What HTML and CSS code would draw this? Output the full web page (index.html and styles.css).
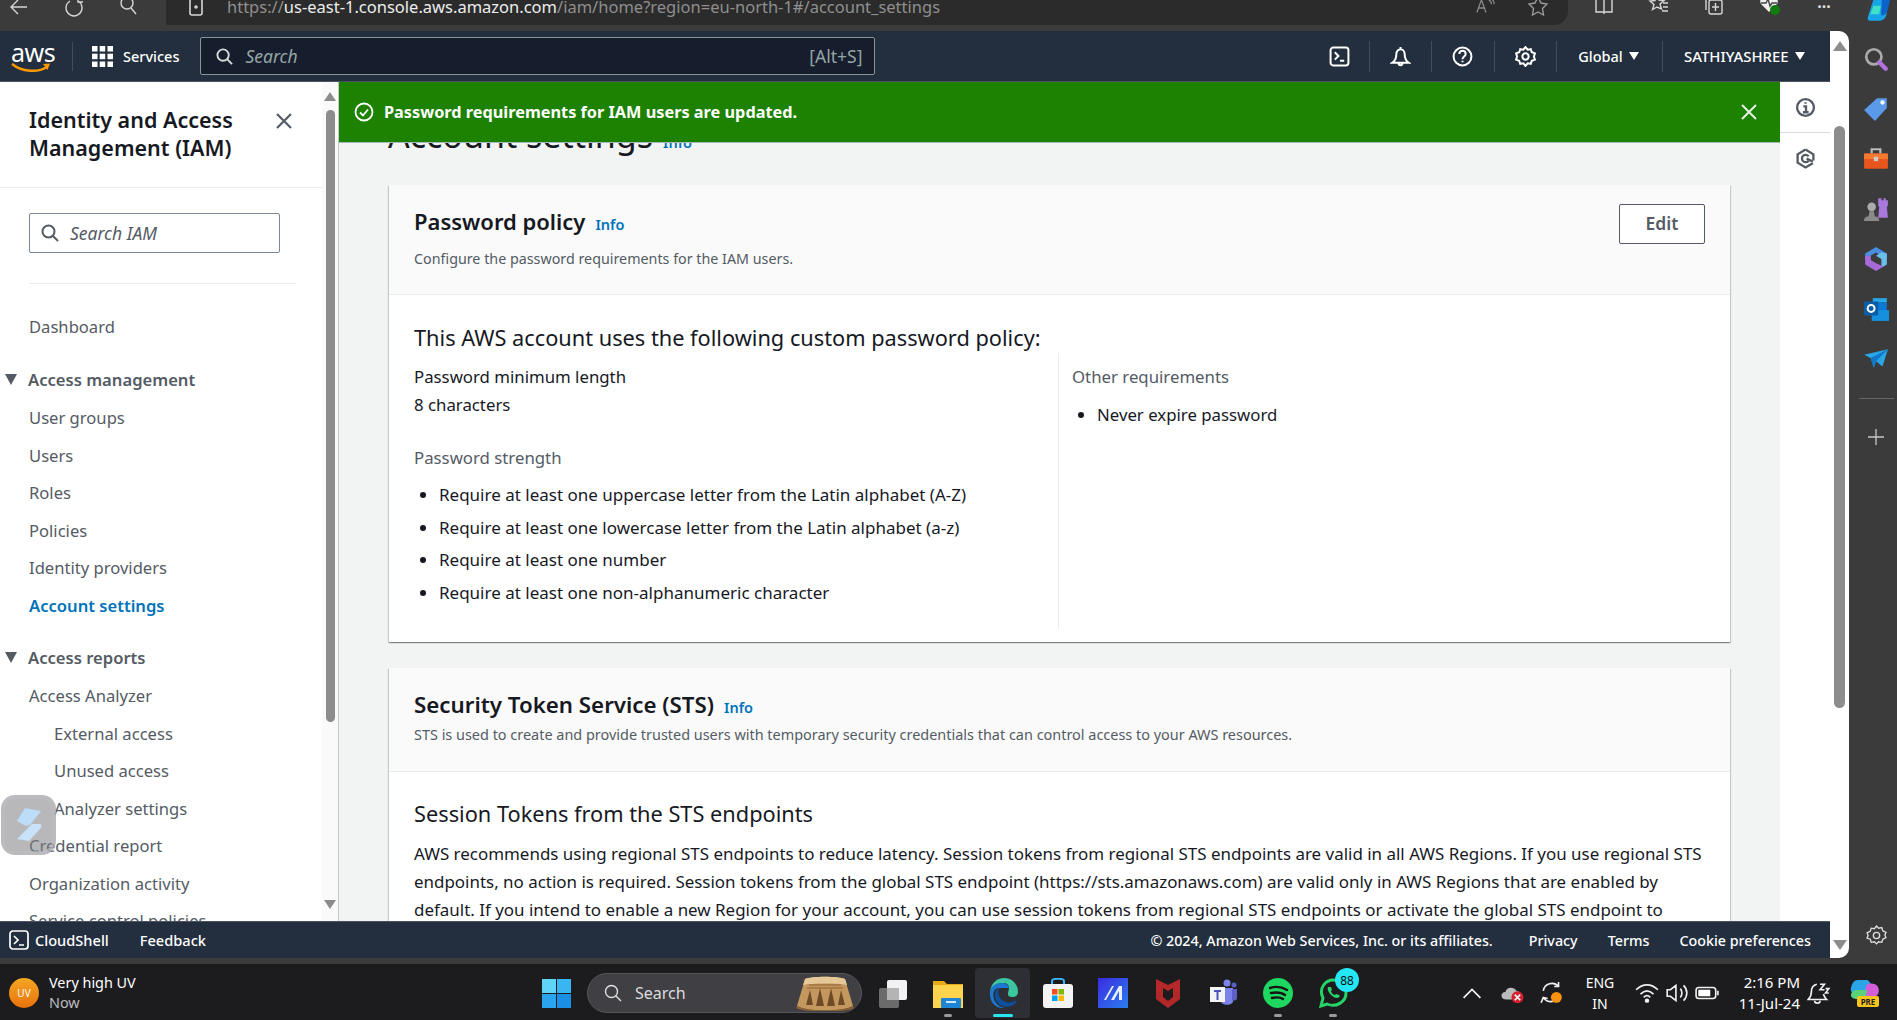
FILE: index.html
```html
<!DOCTYPE html>
<html lang="en">
<head>
    <meta charset="UTF-8">
    <meta name="viewport" content="width=device-width, initial-scale=1.0">
    <title>Account settings</title>
    <link rel="stylesheet" href="styles.css">
</head>
<body>
    <!-- Browser toolbar -->
    <div class="browser-bar">
        <svg class="bar-icon back-icon" viewBox="0 0 20 20"><path d="M18 9H3M9 2 2 9l7 7"/></svg>
        <svg class="bar-icon reload-icon" viewBox="0 0 20 20"><path d="M14 3a8 8 0 1 1-8 0M14 -2v6h5"/></svg>
        <svg class="bar-icon find-icon" viewBox="0 0 20 20"><circle cx="8" cy="5" r="6"/><path d="m12 10 5 6"/></svg>
        <div class="url-pill">
            <svg class="bar-icon lock-icon" viewBox="0 0 20 20"><rect x="4" y="2" width="12" height="16" rx="2"/><circle cx="10" cy="10" r="1"/></svg>
            <div class="url-text">https://<span class="url-host">us-east-1.console.aws.amazon.com</span>/iam/home?region=eu-north-1#/account_settings</div>
            <svg class="bar-icon read-icon" viewBox="0 0 22 20"><path d="M1 15 6 1l5 14M3 10h6M14 1c2 1 3 3 3 5M17 0c2 1 3 3 3 6"/></svg>
            <svg class="bar-icon star-icon" viewBox="0 0 20 20"><path d="m10 -1 3 6 6 1-4.500 4.500L15.500 17 10 14l-5.500 3 1-6.500L1 6l6-1z"/></svg>
        </div>
        <div class="bar-tools">
            <svg class="bar-icon" viewBox="0 0 20 20"><path d="M2 -2h16v16H2zM10 -4v20"/></svg>
            <svg class="bar-icon" viewBox="0 0 20 20"><path d="m8 -3 2 5 5 .5-4 3.500 1.500 5L8 9l-4.500 2.500L5 6.500 1 3l5-.500zM14 5h5M14 9h5M13 13h6"/></svg>
            <svg class="bar-icon" viewBox="0 0 20 20"><rect x="5" y="2" width="13" height="14" rx="2"/><path d="M2 12V0M11.500 5v8M8 9h7"/></svg>
            <svg class="bar-icon health-icon" viewBox="0 0 20 20"><path d="M10 14 2 6c-2-3 0-8 4-8 2 0 3 1 4 2 1-1 2-2 4-2 4 0 6 5 4 8z" class="health-fill"/><path d="M2 5h5l2-4 2 7 2-3h5" class="health-line"/><circle cx="16" cy="12" r="5" fill="#107c10" stroke="none"/></svg>
            <div class="more-dots">···</div>
            <svg class="copilot-top" viewBox="0 0 24 24"><path d="M8 -4h14l-4 20c-1 4-3 6-7 6H3c-2 0-3-2-2-4z" fill="#1aa4e8"/><path d="M14 -4h9L19 12c-1 4-3 5-6 5z" fill="#0d63c9"/><path d="M6 8h7l-2 8H3z" fill="#3ee0c8"/></svg>
        </div>
    </div>

    <div class="window">
        <div class="console">
            <!-- AWS top navigation -->
            <header class="top-nav">
                <div class="aws-logo">
                    <span class="aws-word">aws</span>
                    <svg class="aws-smile" viewBox="0 0 40 12"><path d="M1 2c10 8 26 9 35 3" fill="none" stroke="#ff9900" stroke-width="2.500"/><path d="m32 2 7-.5-2.500 6.500z" fill="#ff9900"/></svg>
                </div>
                <div class="nav-sep logo-sep"></div>
                <div class="services">
                    <svg class="grid-icon" viewBox="0 0 21 21" fill="#fff"><rect width="5.500" height="5.500"/><rect x="7.700" width="5.500" height="5.500"/><rect x="15.500" width="5.500" height="5.500"/><rect y="7.700" width="5.500" height="5.500"/><rect x="7.700" y="7.700" width="5.500" height="5.500"/><rect x="15.500" y="7.700" width="5.500" height="5.500"/><rect y="15.500" width="5.500" height="5.500"/><rect x="7.700" y="15.500" width="5.500" height="5.500"/><rect x="15.500" y="15.500" width="5.500" height="5.500"/></svg>
                    <span>Services</span>
                </div>
                <div class="nav-search">
                    <svg class="search-glyph" viewBox="0 0 18 18"><circle cx="7.500" cy="7.500" r="6"/><path d="m12 12 5 5"/></svg>
                    <span class="nav-search-text">Search</span>
                    <span class="nav-search-key">[Alt+S]</span>
                </div>
                <div class="nav-right">
                    <div class="nav-item">
                        <svg class="nav-icon shell-nudge" viewBox="0 0 20 20"><rect x="1.500" y="1.500" width="17" height="17" rx="2.500"/><path d="m5.500 6 3.500 3.500-3.500 3.500M10.500 14h4"/></svg>
                    </div>
                    <div class="nav-item">
                        <svg class="nav-icon" viewBox="0 0 20 20"><path d="M10 1v2M6 8c0-3 2-5 4-5s4 2 4 5c0 4 1 6 4 8H2c3-2 4-4 4-8zM8 16c0 3 4 3 4 0"/></svg>
                    </div>
                    <div class="nav-item">
                        <svg class="nav-icon" viewBox="0 0 20 20"><circle cx="10" cy="10" r="8.500"/><path d="M7 7.500c0-4 6-4 6 0 0 2.500-3 2.500-3 5M10 14v1.500"/></svg>
                    </div>
                    <div class="nav-item">
                        <svg class="nav-icon" viewBox="0 0 20 20"><path d="m10 1 2 2.500 3-.5 1 3 3 1-1 3 1 3-3 1-1 3-3-.5L10 19l-2-2.500-3 .5-1-3-3-1 1-3-1-3 3-1 1-3 3 .5z"/><circle cx="10" cy="10" r="3"/></svg>
                    </div>
                    <div class="nav-item nav-text region">Global <span class="nav-caret"></span></div>
                    <div class="nav-item nav-text account">SATHIYASHREE <span class="nav-caret"></span></div>
                </div>
            </header>

            <div class="middle">
                <!-- Left navigation -->
                <aside class="side-nav">
                    <div class="side-inner">
                        <div class="side-head">
                            <h2 class="side-title">Identity and Access Management (IAM)</h2>
                            <svg class="side-close" viewBox="0 0 16 16"><path d="m1 1 14 14M15 1 1 15"/></svg>
                        </div>
                        <div class="side-search">
                            <svg class="side-search-icon" viewBox="0 0 18 18"><circle cx="7.500" cy="7.500" r="6"/><path d="m12 12 5 5"/></svg>
                            <span>Search IAM</span>
                        </div>
                        <div class="side-divider"></div>
                        <a class="side-link">Dashboard</a>
                        <div class="side-section"><span class="side-caret"></span>Access management</div>
                        <a class="side-link">User groups</a>
                        <a class="side-link">Users</a>
                        <a class="side-link">Roles</a>
                        <a class="side-link">Policies</a>
                        <a class="side-link">Identity providers</a>
                        <a class="side-link active">Account settings</a>
                        <div class="side-section"><span class="side-caret"></span>Access reports</div>
                        <a class="side-link">Access Analyzer</a>
                        <a class="side-link sub">External access</a>
                        <a class="side-link sub">Unused access</a>
                        <a class="side-link sub">Analyzer settings</a>
                        <a class="side-link">Credential report</a>
                        <a class="side-link">Organization activity</a>
                        <a class="side-link">Service control policies</a>
                    </div>
                    <div class="side-scroll">
                        <span class="arrow-up"></span>
                        <div class="side-thumb"></div>
                        <span class="arrow-down"></span>
                    </div>
                </aside>

                <main class="main">
                    <div class="flash">
                        <svg class="flash-check" viewBox="0 0 20 20"><circle cx="10" cy="10" r="8.500"/><path d="m6 10.500 3 3 5-6"/></svg>
                        <span class="flash-text">Password requirements for IAM users are updated.</span>
                        <svg class="flash-close" viewBox="0 0 16 16"><path d="m1 1 14 14M15 1 1 15"/></svg>
                    </div>

                    <div class="page-head">
                        <h1>Account settings</h1>
                        <a class="info-link">Info</a>
                    </div>

                    <section class="card first-card">
                        <div class="card-header">
                            <div>
                                <div class="title-row">
                                    <h2>Password policy</h2>
                                    <a class="info-link">Info</a>
                                </div>
                                <p class="card-desc">Configure the password requirements for the IAM users.</p>
                            </div>
                            <button class="edit-btn">Edit</button>
                        </div>
                        <div class="card-body">
                            <h3>This AWS account uses the following custom password policy:</h3>
                            <div class="policy-cols">
                                <div class="policy-left">
                                    <div class="line">Password minimum length</div>
                                    <div class="line">8 characters</div>
                                    <div class="line muted strength">Password strength</div>
                                    <ul class="policy-list">
                                        <li>Require at least one uppercase letter from the Latin alphabet (A-Z)</li>
                                        <li>Require at least one lowercase letter from the Latin alphabet (a-z)</li>
                                        <li>Require at least one number</li>
                                        <li>Require at least one non-alphanumeric character</li>
                                    </ul>
                                </div>
                                <div class="policy-right">
                                    <div class="line muted">Other requirements</div>
                                    <ul class="policy-list">
                                        <li>Never expire password</li>
                                    </ul>
                                </div>
                            </div>
                        </div>
                    </section>

                    <section class="card second-card">
                        <div class="card-header">
                            <div>
                                <div class="title-row">
                                    <h2>Security Token Service (STS)</h2>
                                    <a class="info-link">Info</a>
                                </div>
                                <p class="card-desc tight">STS is used to create and provide trusted users with temporary security credentials that can control access to your AWS resources.</p>
                            </div>
                        </div>
                        <div class="card-body">
                            <h3>Session Tokens from the STS endpoints</h3>
                            <p class="sts-text">AWS recommends using regional STS endpoints to reduce latency. Session tokens from regional STS endpoints are valid in all AWS Regions. If you use regional STS endpoints, no action is required. Session tokens from the global STS endpoint (https://sts.amazonaws.com) are valid only in AWS Regions that are enabled by default. If you intend to enable a new Region for your account, you can use session tokens from regional STS endpoints or activate the global STS endpoint to</p>
                        </div>
                    </section>
                </main>

                <!-- Right tools rail -->
                <aside class="tools">
                    <div class="tool-cell">
                        <svg class="tool-icon" viewBox="0 0 20 20"><circle cx="10" cy="10" r="8"/><path d="M8 9h2.500v5M7.500 14.500h5.500M10 5v1.500"/></svg>
                    </div>
                    <div class="tool-cell">
                        <svg class="tool-icon" viewBox="0 0 20 20"><path d="M10 1.500 17.500 6v6M17 14.500 10 18.500 2.500 14V6L10 1.500"/><path d="M13 8a3.500 3.500 0 1 0 0 4"/><path d="m11 10 6 3"/></svg>
                    </div>
                </aside>
            </div>

            <footer class="console-footer">
                <svg class="foot-shell" viewBox="0 0 20 20"><rect x="1" y="1" width="18" height="18" rx="3"/><path d="m5 6 4 4-4 4M10 15h5"/></svg>
                <span class="foot-link shell-label">CloudShell</span>
                <span class="foot-link">Feedback</span>
                <div class="foot-right">
                    <span class="foot-link copyright">© 2024, Amazon Web Services, Inc. or its affiliates.</span>
                    <span class="foot-link">Privacy</span>
                    <span class="foot-link">Terms</span>
                    <span class="foot-link">Cookie preferences</span>
                </div>
            </footer>
        </div>

        <div class="page-scroll">
            <span class="arrow-up big"></span>
            <div class="page-thumb"></div>
            <span class="arrow-down big"></span>
        </div>

        <!-- Edge sidebar -->
        <div class="edge-rail">
            <svg class="edge-icon" viewBox="0 0 24 24"><circle cx="10" cy="10" r="7" fill="none" stroke="#aaa" stroke-width="2.500"/><path d="m15 15 6 6" stroke="#b46fe0" stroke-width="4" stroke-linecap="round"/></svg>
            <svg class="edge-icon" viewBox="0 0 24 24"><path d="M13 2h9v9L11 23 1 13z" fill="#5b9ae8"/><circle cx="18" cy="6" r="2" fill="#fff"/></svg>
            <svg class="edge-icon" viewBox="0 0 24 24"><path d="M8 7V3h8v4" fill="none" stroke="#bbb" stroke-width="2"/><rect x="1" y="7" width="22" height="14" rx="1" fill="#e8561e"/><rect x="1" y="7" width="22" height="5" fill="#f47a32"/><rect x="10" y="10" width="4" height="4" fill="#ccc"/></svg>
            <svg class="edge-icon" viewBox="0 0 24 24"><circle cx="8" cy="10" r="4" fill="#aaa"/><path d="M6 14h4l1 5H5zM1 23c0-3 2-4 3-4h8c1 0 3 1 3 4z" fill="#8a8a8a"/><path d="M15 2h2v2h2V2h2v2h2v5l-1 1 1 10h-9l1-10-1-1V2z" fill="#a878dc"/></svg>
            <svg class="edge-icon" viewBox="0 0 24 24"><path d="M12 1 22 7v5l-5-3-5-3-5 3v6l-5-3V7z" fill="#4a8ee0"/><path d="M22 7v10l-5 3v-8l-5-3 5-3z" fill="#6ac0ec"/><path d="M2 9v8l10 6 7-4-7-3-5-3V9z" fill="#a86ad8"/></svg>
            <svg class="edge-icon" viewBox="0 0 24 24"><path d="M9 2h13v4H9z" fill="#28a8ea"/><path d="M9 6h13v8H9z" fill="#0a78d4"/><path d="M8 13h16v10H8z" fill="#1490df"/><rect x="1" y="5" width="13" height="13" rx="1" fill="#0a5ea8"/><circle cx="7.500" cy="11.500" r="3.200" fill="none" stroke="#fff" stroke-width="1.800"/></svg>
            <svg class="edge-icon" viewBox="0 0 24 24"><path d="M1 8 23 3 18 19l-6-5-2 6-3-9z" fill="#2aa6e8"/><path d="m7 11 16-8-11 11-2 6z" fill="#0f78c8"/></svg>
            <div class="edge-divider"></div>
            <svg class="edge-plus" viewBox="0 0 16 16"><path d="M8 0v16M0 8h16"/></svg>
            <svg class="edge-gear" viewBox="0 0 20 20"><path d="m10 1 2 2 3-.5 1 3 3 1.500-1 2.500 1 2.500-3 1.500-1 3-3-.5-2 2-2-2-3 .5-1-3L1 12.500 2 10 1 7.500 4 6l1-3 3 .5z"/><circle cx="10" cy="10" r="3"/></svg>
        </div>
    </div>

    <!-- Windows taskbar -->
    <div class="taskbar">
        <div class="weather">
            <div class="uv-badge">UV</div>
            <div>
                <div class="weather-top">Very high UV</div>
                <div class="weather-sub">Now</div>
            </div>
        </div>
        <svg class="start-icon" viewBox="0 0 29 29"><rect width="14" height="14" fill="#5fd3f8"/><rect x="15" width="14" height="14" fill="#38b6f2"/><rect y="15" width="14" height="14" fill="#2aa4ef"/><rect x="15" y="15" width="14" height="14" fill="#1a8fe6"/></svg>
        <div class="task-search">
            <svg class="task-search-icon" viewBox="0 0 18 18"><circle cx="7.500" cy="7.500" r="6"/><path d="m12 12 5 5"/></svg>
            <span class="task-search-text">Search</span>
            <svg class="task-hero" viewBox="0 0 60 36"><path d="M10 4c6-3 34-3 40 0l8 27c-10 6-46 6-56 0z" fill="#c4975f"/><path d="M10 4c6-3 34-3 40 0l2 6c-8-2-36-2-44 0z" fill="#e6c796"/><path d="M11 30l4-15 3 15zM21 31l4-18 4 18zM32 31l4-18 4 18zM43 30l3-15 4 15z" fill="#6f4a26"/><path d="M14 10h32M12 13h36" stroke="#8d6233" stroke-width="1" fill="none"/><path d="M2 31c10 6 46 6 56 0l1 2c-10 5-48 5-58 0z" fill="#8d6233"/></svg>
        </div>
        <div class="task-apps">
            <div class="task-app">
                <svg class="app-icon" viewBox="0 0 30 30"><rect x="9" y="2" width="20" height="20" rx="2" fill="#f2f2f2"/><rect x="1" y="10" width="20" height="20" rx="2" fill="#6b6b6b"/><rect x="9" y="10" width="12" height="12" fill="#b4b4b4"/></svg>
            </div>
            <div class="task-app running">
                <svg class="app-icon" viewBox="0 0 30 30"><path d="M0 3h11l3 3h16v24H0z" fill="#e8a917"/><rect y="7" width="30" height="23" fill="#fcd34d"/><rect x="8" y="20" width="20" height="10" rx="1" fill="#1e84d4"/><rect x="13" y="23" width="10" height="2" fill="#cfe8fa"/></svg>
            </div>
            <div class="task-app active">
                <svg class="app-icon" viewBox="0 0 30 30"><path d="M2 14C3 5 9 0 16 0c8 0 14 6 14 14 0 3-2 5-6 5-3 0-4-1-4-3 0-3 1-4 1-6C21 6 18 5 15 5 8 5 3 9 2 14z" fill="#3bc6a0"/><path d="M2 14C3 8 8 5 14 5c3 0 7 2 7 5H11C6 10 4 16 6 21c1 4 5 8 11 9C8 31 1 24 2 14z" fill="#1b77d2"/><path d="M11 10c-4 2-5 8-3 12 2 5 8 8 15 6 3-1 5-3 6-6-4 3-12 4-16-1-3-3-3-8-2-11z" fill="#0c4f9e"/></svg>
            </div>
            <div class="task-app">
                <svg class="app-icon" viewBox="0 0 30 30"><path d="M9 6V3c0-3 12-3 12 0v3" fill="none" stroke="#38b6f2" stroke-width="2"/><rect y="6" width="30" height="24" rx="3" fill="#f4f4f4"/><rect x="9" y="11" width="5.500" height="5.500" fill="#f25022"/><rect x="15.500" y="11" width="5.500" height="5.500" fill="#7fba00"/><rect x="9" y="17.500" width="5.500" height="5.500" fill="#00a4ef"/><rect x="15.500" y="17.500" width="5.500" height="5.500" fill="#ffb900"/></svg>
            </div>
            <div class="task-app">
                <svg class="app-icon" viewBox="0 0 30 30"><defs><linearGradient id="maestro" x1="0" y1="0" x2="1" y2="1"><stop offset="0" stop-color="#3b2be0"/><stop offset="1" stop-color="#2a7ff0"/></linearGradient></defs><rect width="30" height="30" fill="url(#maestro)"/><path d="M6 22 14 8h2L8 22zM13 22l8-14h3v14h-3V13l-5 9z" fill="#e8f0ff"/></svg>
            </div>
            <div class="task-app">
                <svg class="app-icon" viewBox="0 0 30 30"><path d="M3 1 15 7 27 1v20L15 30 3 21z" fill="#b5282a"/><path d="M10 10l5 3 5-3v9l-5 4-5-4z" fill="#1c1c1f"/></svg>
            </div>
            <div class="task-app">
                <svg class="app-icon" viewBox="0 0 30 30"><circle cx="19" cy="5" r="3.500" fill="#7b83eb"/><circle cx="26" cy="7" r="2.500" fill="#5b5fc7"/><path d="M13 10h12v13c0 5-12 5-12 0z" fill="#7b83eb"/><path d="M24 11h5v9c0 3-4 3-5 2z" fill="#5b5fc7"/><rect x="2" y="9" width="15" height="15" fill="#f4f4f4"/><path d="M6 12h7v2h-2.500v8h-2v-8H6z" fill="#4b53bc"/></svg>
            </div>
            <div class="task-app running">
                <svg class="app-icon" viewBox="0 0 30 30"><circle cx="15" cy="15" r="15" fill="#1ed760"/><path d="M7 10c6-2 12-1 17 2M8 15c5-1 10-1 14 2M9 20c4-1 8-1 11 1" fill="none" stroke="#191414" stroke-width="2.400" stroke-linecap="round"/></svg>
            </div>
            <div class="task-app running">
                <svg class="app-icon" viewBox="0 0 30 30"><path d="M3 28 5 20C0 10 8 2 15 2c8 0 13 6 13 13 0 9-10 15-19 11z" fill="none" stroke="#25d366" stroke-width="3"/><path d="M10 9c-2 3 4 11 9 11 3 0 3-3 2-3l-3-1-1 1c-2 0-4-3-4-4l1-1-1-3z" fill="#25d366"/></svg>
                <span class="app-badge">88</span>
            </div>
        </div>
        <div class="tray">
            <svg class="tray-icon" viewBox="0 0 20 20"><path d="m3 14 7-7 7 7"/></svg>
            <svg class="tray-icon" viewBox="0 0 22 20"><path d="M6 16c-6 0-6-7-1-7 1-5 8-5 10-1 4 0 5 5 1 8z" fill="#bbb" stroke="none"/><circle cx="16" cy="14" r="5.500" fill="#d4202f" stroke="none"/><path d="m13.500 11.500 5 5m0-5-5 5" stroke-width="1.500"/></svg>
            <svg class="tray-icon sync-icon" viewBox="0 0 22 22"><path d="M3 9a8 8 0 0 1 14-4M17 1v4h-4M16 16a8 8 0 0 1-13-1M1 20l2-5 4 1"/><circle cx="15" cy="15" r="5" fill="#f7930e" stroke="none"/></svg>
            <div class="tray-lang"><div>ENG</div><div>IN</div></div>
            <div class="tray-net">
                <svg class="tray-icon" viewBox="0 0 22 20"><path d="M1 7c6-6 14-6 20 0M5 11c4-4 8-4 12 0"/><path d="M8 14c2-2 4-2 6 0"/><circle cx="11" cy="17" r="1.300" fill="#fff"/></svg>
                <svg class="tray-icon" viewBox="0 0 22 20"><path d="M2 7v6h3l5 4V3L5 7zM14 6c2 2 2 6 0 8M17 3c4 4 4 10 0 14"/></svg>
                <svg class="tray-icon" viewBox="0 0 22 20"><rect x="1" y="5" width="18" height="10" rx="2.500"/><rect x="3" y="7" width="11" height="6" fill="#fff" stroke="none"/><path d="M21 8v4"/></svg>
            </div>
            <div class="tray-clock"><div>2:16 PM</div><div>11-Jul-24</div></div>
            <svg class="tray-icon bell-z" viewBox="0 0 22 22"><path d="M9 3C5 4 4 7 4 10c0 3-1 5-3 7h17c-2-2-2-3-3-5M7 18c0 3 5 3 5 0M12 3h4l-4 5h4M17 7h3l-3 4h3"/></svg>
            <svg class="tray-copilot" viewBox="0 0 32 30"><path d="M9 2h8c3 0 4 2 5 5l3 9H8c-4 0-7-2-6-6 1-5 3-8 7-8z" fill="#2aa6e8"/><path d="M18 6c4-1 9-1 11 3 2 5 0 9-4 10H14z" fill="#d35fd8"/><path d="M7 12c-3 0-5 3-5 5 0 3 3 4 6 4h8l2-9z" fill="#5ad27a"/><rect x="8" y="18" width="22" height="11" rx="2" fill="#f7c51c"/><text x="19" y="27" class="pre-text">PRE</text></svg>
        </div>
    </div>

    <!-- Floating widget over the left navigation -->
    <div class="float-widget">
        <svg class="float-glyph" viewBox="0 0 26 34"><path d="M9 0 25 3 14 17c-2 1-4 1-6 0L1 13z" fill="#bcdcf8"/><path d="M24 16c2 1 2 3 0 5L13 33 1 31l15-15z" fill="#c8e2fa"/></svg>
    </div>
</body>
</html>
```

FILE: styles.css
```css
* {
    box-sizing: border-box;
}

html, body {
    height: 100%;
}

body {
    margin: 0;
    width: 1897px;
    height: 1020px;
    overflow: hidden;
    display: flex;
    flex-direction: column;
    background-color: #3b3b3b;
    font-family: "Noto Sans", "Open Sans", Arial, sans-serif;
    color: #16191f;
}

h1, h2, h3, p, ul {
    margin: 0;
}

svg {
    display: block;
    flex: none;
}

/* browser toolbar */
.browser-bar {
    height: 31px;
    flex: none;
    display: flex;
    align-items: flex-start;
    background-color: #3b3b3b;
    overflow: hidden;
}

.bar-icon {
    width: 20px;
    height: 20px;
    margin-top: -2px;
    fill: none;
    stroke: #d6d6d6;
    stroke-width: 1.4;
    overflow: visible;
}

.back-icon {
    margin-left: 9px;
}

.reload-icon {
    margin-left: 35px;
}

.find-icon {
    margin-left: 35px;
}

.url-pill {
    width: 1402px;
    height: 25px;
    margin-left: 27px;
    padding-left: 20px;
    display: flex;
    align-items: flex-start;
    background-color: #2b2b2b;
    border-radius: 0 0 14px 0;
}

.lock-icon {
    margin-top: -3px;
    stroke-width: 1.6;
}

.url-text {
    width: 1249px;
    margin-left: 21px;
    margin-top: -5px;
    font-size: 16.500px;
    line-height: 24px;
    color: #8f8f8f;
    white-space: nowrap;
}

.url-host {
    color: #ededed;
}

.read-icon {
    width: 20px;
    margin-top: -2px;
    stroke: #8a8a8a;
}

.star-icon {
    margin-left: 32px;
    stroke: #9a9a9a;
}

.bar-tools {
    display: flex;
    align-items: flex-start;
    gap: 35px;
    margin-left: 26px;
}

.health-fill {
    fill: #eee;
    stroke: none;
}

.health-line {
    stroke: #444;
}

.more-dots {
    width: 20px;
    margin-top: -4px;
    font-size: 16px;
    font-weight: 700;
    line-height: 20px;
    color: #ddd;
    text-align: center;
}

.copilot-top {
    width: 26px;
    height: 26px;
    margin-left: -2px;
    margin-top: -3px;
    overflow: visible;
}

/* window: console + scrollbar + edge rail */
.window {
    flex: 1;
    min-height: 0;
    display: flex;
}

.console {
    width: 1830px;
    flex: none;
    display: flex;
    flex-direction: column;
}

.top-nav {
    height: 51px;
    flex: none;
    display: flex;
    align-items: center;
    background-color: #232f3e;
    border-bottom: 1px solid #4a5460;
    color: #fff;
}

.aws-logo {
    width: 40px;
    height: 30px;
    margin-left: 11px;
    flex: none;
}

.aws-word {
    display: block;
    font-size: 25px;
    line-height: 22px;
    letter-spacing: -0.5px;
    color: #fff;
}

.aws-smile {
    width: 40px;
    height: 12px;
    margin-top: -1px;
}

.nav-sep {
    width: 1px;
    height: 29px;
    background-color: #414d5c;
}

.logo-sep {
    margin-left: 21px;
}

.services {
    display: flex;
    align-items: center;
    gap: 10px;
    margin-left: 19px;
    font-size: 14.500px;
    font-weight: 500;
}

.grid-icon {
    width: 21px;
    height: 21px;
}

.nav-search {
    width: 675px;
    height: 38px;
    margin-left: 21px;
    padding: 0 12px 0 15px;
    display: flex;
    align-items: center;
    background-color: #161e2d;
    border: 1px solid #879596;
    border-radius: 2px;
    font-size: 17.500px;
}

.search-glyph {
    width: 17px;
    height: 17px;
    fill: none;
    stroke: #d5dbdb;
    stroke-width: 2;
}

.nav-search-text {
    margin-left: 12px;
    font-style: italic;
    color: #95a5a6;
}

.nav-search-key {
    margin-left: auto;
    color: #95a5a6;
}

.nav-right {
    margin-left: auto;
    display: flex;
    align-items: center;
    height: 31px;
}

.nav-item {
    height: 31px;
    width: 62.500px;
    display: flex;
    align-items: center;
    justify-content: center;
    border-left: 1px solid #414d5c;
    font-size: 14.500px;
    font-weight: 500;
}

.nav-item:first-child {
    border-left: 0;
}

.nav-text {
    gap: 6px;
}

.region {
    width: 106px;
    padding-right: 2px;
}

.account {
    width: 168px;
    justify-content: flex-start;
    padding-left: 21px;
    font-size: 14.900px;
}

.nav-icon {
    width: 21px;
    height: 21px;
    fill: none;
    stroke: #fff;
    stroke-width: 1.900;
}

.shell-nudge {
    margin-left: 4px;
}

.nav-caret {
    width: 0;
    height: 0;
    border-left: 5.500px solid transparent;
    border-right: 5.500px solid transparent;
    border-top: 8px solid #fff;
}

.middle {
    flex: 1;
    min-height: 0;
    display: flex;
}

/* left navigation */
.side-nav {
    width: 338px;
    flex: none;
    display: flex;
    background-color: #fff;
    overflow: hidden;
}

.side-inner {
    width: 322px;
    flex: none;
    overflow: hidden;
}

.side-head {
    padding: 24px 29px 25px 29px;
    display: flex;
    justify-content: space-between;
    border-bottom: 1px solid #eaeded;
}

.side-title {
    width: 225px;
    font-size: 21.500px;
    line-height: 28px;
    font-weight: 600;
}

.side-close {
    width: 16px;
    height: 16px;
    margin: 7px 1px 0 0;
    fill: none;
    stroke: #545b64;
    stroke-width: 2.200;
}

.side-search {
    width: 251px;
    height: 40px;
    margin: 25px 0 0 29px;
    padding-left: 11px;
    display: flex;
    align-items: center;
    gap: 11px;
    border: 1px solid #7d8998;
    border-radius: 2px;
    font-size: 17.500px;
    font-style: italic;
    color: #545b64;
}

.side-search-icon {
    width: 18px;
    height: 18px;
    fill: none;
    stroke: #545b64;
    stroke-width: 2;
}

.side-divider {
    width: 267px;
    height: 1px;
    margin: 30px 0 24px 29px;
    background-color: #eaeded;
}

.side-link, .side-section {
    display: flex;
    align-items: center;
    height: 37.500px;
    font-size: 16.600px;
    white-space: nowrap;
}

.side-link {
    padding-left: 29px;
    color: #545b64;
}

.side-link.sub {
    padding-left: 54px;
}

.side-link.active {
    color: #0073bb;
    font-weight: 600;
}

.side-section {
    height: 38.500px;
    margin-top: 14.800px;
    padding-left: 5px;
    gap: 11px;
    color: #545b64;
    font-weight: 600;
}

.side-caret {
    width: 0;
    height: 0;
    border-left: 6.500px solid transparent;
    border-right: 6.500px solid transparent;
    border-top: 11px solid #545b64;
}

.side-scroll {
    flex: 1;
    padding-top: 10px;
    background-color: #fafafa;
    display: flex;
    flex-direction: column;
    align-items: center;
}

.side-thumb {
    width: 9px;
    height: 612px;
    margin: 9px 0 178px;
    border-radius: 5px;
    background-color: #8c8c8c;
    flex: none;
}

.arrow-up, .arrow-down {
    width: 0;
    height: 0;
    border-left: 6px solid transparent;
    border-right: 6px solid transparent;
    flex: none;
}

.arrow-up {
    border-bottom: 9px solid #8c8c8c;
}

.arrow-down {
    border-top: 9px solid #8c8c8c;
}

/* main content */
.main {
    flex: 1;
    min-width: 0;
    position: relative;
    overflow: hidden;
    padding-top: 32px;
    background-color: #f2f3f3;
    border-left: 1px solid #c4c9c9;
}

.flash {
    position: absolute;
    top: 0;
    left: 0;
    right: 0;
    height: 61px;
    padding: 0 23px 0 15px;
    display: flex;
    align-items: center;
    background-color: #1d8102;
    border-bottom: 1px solid #aab7b8;
    color: #fff;
}

.flash-check {
    width: 20px;
    height: 20px;
    fill: none;
    stroke: #fff;
    stroke-width: 1.800;
}

.flash-text {
    margin-left: 10px;
    font-size: 16.300px;
    font-weight: 700;
}

.flash-close {
    width: 16px;
    height: 16px;
    margin-left: auto;
    fill: none;
    stroke: #e8f0e4;
    stroke-width: 2;
}

.page-head {
    margin-left: 49px;
    height: 42px;
    display: flex;
    align-items: baseline;
    gap: 10px;
}

.page-head h1 {
    font-size: 34px;
    line-height: 42px;
    font-weight: 400;
}

.info-link {
    font-size: 14.500px;
    font-weight: 600;
    color: #0073bb;
}

.card {
    margin: 0 50px;
    background-color: #fff;
    box-shadow: 0 1px 1px 0 rgba(0, 28, 36, 0.3), 1px 1px 1px 0 rgba(0, 28, 36, 0.15), -1px 1px 1px 0 rgba(0, 28, 36, 0.15);
}

.first-card {
    margin-top: 29px;
    height: 457px;
}

.second-card {
    margin-top: 26px;
}

.second-card .title-row {
    margin-top: 3px;
}

.second-card .title-row h2 {
    font-size: 22.300px;
}

.card-header {
    padding: 19px 25px 26px 25px;
    display: flex;
    justify-content: space-between;
    align-items: flex-start;
    background-color: #fafafa;
    border-bottom: 1px solid #eaeded;
}

.title-row {
    margin-top: 2px;
    display: flex;
    align-items: baseline;
    gap: 10px;
}

.title-row h2 {
    font-size: 22px;
    line-height: 30px;
    font-weight: 600;
}

.card-desc {
    margin-top: 13px;
    font-size: 14.300px;
    line-height: 20px;
    color: #545b64;
}

.card-desc.tight {
    margin-top: 5px;
    font-size: 14.450px;
}

.first-card .card-header {
    padding-bottom: 25px;
}

.edit-btn {
    width: 86px;
    height: 40px;
    padding: 0 0 2px;
    background-color: #fff;
    border: 1px solid #545b64;
    border-radius: 2px;
    font-family: inherit;
    font-size: 17.500px;
    font-weight: 600;
    color: #545b64;
}

.card-body {
    padding: 28px 25px 14px;
}

.card-body h3 {
    font-size: 21.750px;
    line-height: 30px;
    font-weight: 400;
}

.policy-cols {
    display: flex;
}

.policy-left {
    width: 645px;
    flex: none;
    padding: 10px 0 19px;
    border-right: 1px solid #eaeded;
}

.policy-right {
    padding: 10px 0 0 13px;
}

.line {
    font-size: 16.800px;
    line-height: 28px;
}

.muted {
    color: #545b64;
}

.strength {
    margin-top: 25px;
}

.policy-list {
    margin-top: 7px;
    padding-left: 25px;
    font-size: 17px;
}

.policy-right .policy-list {
    margin-top: 8px;
    font-size: 16.800px;
}

.policy-list li {
    height: 32.700px;
    line-height: 32.700px;
}

.second-card .card-body {
    padding-top: 27px;
}

.sts-text {
    margin-top: 11px;
    font-size: 16.950px;
    line-height: 27.800px;
}

/* right tools rail */
.tools {
    width: 50px;
    flex: none;
    background-color: #fff;
}

.tool-cell {
    height: 51px;
    display: flex;
    align-items: center;
    justify-content: center;
    border-bottom: 1px solid #d5dbdb;
}

.tool-cell:last-child {
    border-bottom: 0;
}

.tool-icon {
    width: 21px;
    height: 21px;
    fill: none;
    stroke: #545b64;
    stroke-width: 2.200;
}

/* console footer */
.console-footer {
    height: 37px;
    flex: none;
    display: flex;
    align-items: center;
    padding: 0 19px 0 9px;
    background-color: #232f3e;
    border-top: 1px solid #4a5460;
    color: #fff;
}

.foot-shell {
    width: 20px;
    height: 20px;
    fill: none;
    stroke: #fff;
    stroke-width: 1.700;
}

.foot-link {
    font-size: 14.300px;
    font-weight: 500;
    white-space: nowrap;
}

.console-footer > .foot-link {
    font-size: 14.600px;
}

.shell-label {
    margin: 0 31px 0 6px;
}

.foot-right {
    margin-left: auto;
    display: flex;
    gap: 30px;
}

.copyright {
    margin-right: 6px;
}

/* page scrollbar */
.page-scroll {
    width: 19px;
    flex: none;
    height: 927px;
    padding-top: 10px;
    display: flex;
    flex-direction: column;
    align-items: center;
    background-color: #fff;
    border-radius: 0 10px 10px 0;
}

.arrow-up.big, .arrow-down.big {
    border-left-width: 7px;
    border-right-width: 7px;
    border-bottom-width: 10px;
    border-top-width: 10px;
}

.page-thumb {
    width: 11px;
    height: 582px;
    margin: 75px 0 232px;
    flex: none;
    border-radius: 6px;
    background-color: #8c8c8c;
}

/* edge sidebar */
.edge-rail {
    flex: 1;
    padding: 15px 0 0 6px;
    display: flex;
    flex-direction: column;
    align-items: center;
    gap: 24px;
    background-color: #3b3b3b;
}

.edge-icon {
    width: 26px;
    height: 26px;
}

.edge-divider {
    width: 35px;
    height: 1px;
    margin-top: 2px;
    background-color: #666;
}

.edge-plus {
    width: 16px;
    height: 16px;
    margin-top: 6px;
    fill: none;
    stroke: #c8c8c8;
    stroke-width: 1.300;
}

.edge-gear {
    width: 21px;
    height: 21px;
    margin-top: 456px;
    fill: none;
    stroke: #ddd;
    stroke-width: 1.300;
}

/* taskbar */
.taskbar {
    height: 62px;
    flex: none;
    display: flex;
    align-items: center;
    padding-top: 2px;
    background-color: #1c1c1f;
    border-top: 6px solid #3b3b3b;
    color: #fff;
}

.weather {
    width: 542px;
    flex: none;
    padding-left: 9px;
    display: flex;
    align-items: center;
    gap: 10px;
    font-size: 14.400px;
    line-height: 20px;
}

.uv-badge {
    width: 30px;
    height: 30px;
    display: flex;
    align-items: center;
    justify-content: center;
    border-radius: 50%;
    background: linear-gradient(#f5a623, #e8730c);
    font-size: 10px;
}

.weather-sub {
    color: #bdbdbd;
}

.start-icon {
    width: 29px;
    height: 29px;
}

.task-search {
    width: 275px;
    height: 40px;
    flex: none;
    margin-left: 16px;
    padding-left: 16px;
    display: flex;
    align-items: center;
    border-radius: 20px;
    background-color: #3f3f44;
    border: 1px solid #55555a;
    font-size: 16px;
    color: #ddd;
}

.task-search-icon {
    width: 18px;
    height: 18px;
    fill: none;
    stroke: #e0e0e0;
    stroke-width: 1.400;
}

.task-search-text {
    margin-left: 13px;
}

.task-hero {
    width: 60px;
    height: 36px;
    margin-left: auto;
    margin-right: 6px;
}

.task-apps {
    display: flex;
    flex: none;
    margin-left: 3px;
}

.task-app {
    position: relative;
    width: 55px;
    height: 50px;
    display: flex;
    align-items: center;
    justify-content: center;
    border-radius: 4px;
}

.task-app.active {
    background-color: #2e2f34;
}

.task-app.running::after, .task-app.active::after {
    content: "";
    position: absolute;
    left: 50%;
    bottom: 1px;
    width: 8px;
    height: 3px;
    margin-left: -4px;
    border-radius: 2px;
    background-color: #9a9a9a;
}

.task-app.active::after {
    width: 20px;
    margin-left: -10px;
    background-color: #27e6f0;
}

.app-icon {
    width: 30px;
    height: 30px;
}

.app-badge {
    position: absolute;
    top: 0;
    left: 30px;
    width: 24px;
    height: 24px;
    display: flex;
    align-items: center;
    justify-content: center;
    border-radius: 50%;
    background-color: #25e6f5;
    font-size: 12px;
    color: #111;
}

.tray {
    margin-left: 100px;
    display: flex;
    flex: none;
    align-items: center;
}

.tray-icon {
    width: 24px;
    height: 24px;
    margin-right: 16px;
    fill: none;
    stroke: #f0f0f0;
    stroke-width: 1.500;
}

.sync-icon {
    margin-right: 13px;
}

.tray-lang {
    width: 46px;
    margin-right: 12px;
    font-size: 14px;
    line-height: 21px;
    text-align: center;
}

.tray-net {
    display: flex;
}

.tray-net .tray-icon {
    margin-right: 6px;
}

.tray-clock {
    width: 78px;
    margin-left: -3px;
    margin-top: -1px;
    font-size: 15px;
    line-height: 21px;
    text-align: right;
}

.bell-z {
    margin: 0 0 0 7px;
}

.tray-copilot {
    width: 32px;
    height: 30px;
    margin-left: 18px;
}

.pre-text {
    font-size: 8px;
    font-weight: 700;
    text-anchor: middle;
    fill: #222;
}

/* floating widget */
.float-widget {
    position: absolute;
    left: 1px;
    top: 795px;
    width: 55px;
    height: 60px;
    display: flex;
    align-items: center;
    justify-content: center;
    border-radius: 14px;
    background-color: rgba(125, 125, 130, 0.55);
    border: 4px solid rgba(190, 190, 195, 0.6);
}

.float-glyph {
    width: 26px;
    height: 34px;
}
```
